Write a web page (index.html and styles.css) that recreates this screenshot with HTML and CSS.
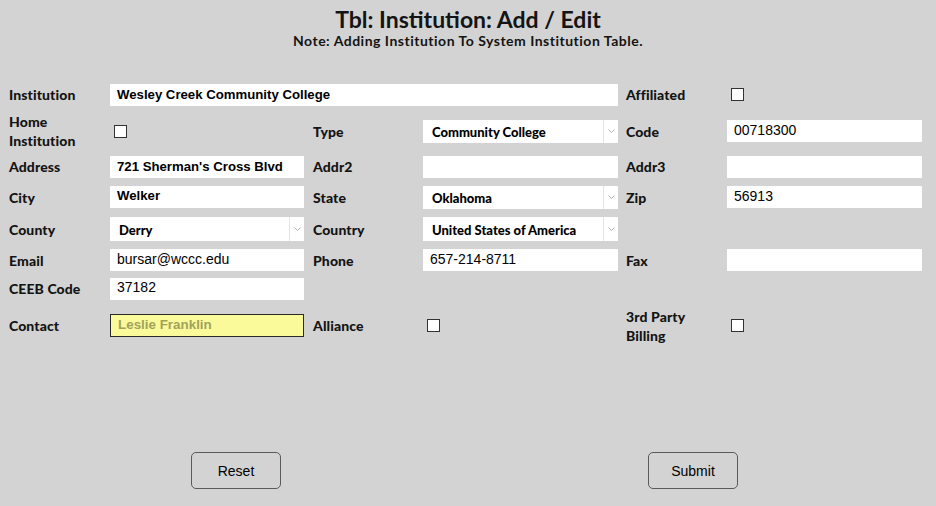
FILE: index.html
```html
<!DOCTYPE html>
<html>
<head>
<meta charset="utf-8">
<link rel="stylesheet" href="styles.css">
</head>
<body>
<div class="page">
  <header class="head">
    <h1 class="title">Tbl: Institution: Add / Edit</h1>
    <p class="note">Note: Adding Institution To System Institution Table.</p>
  </header>
  <form class="form">
    <label class="lbl c1">Institution</label>
    <div class="fld wide"><input class="inp bold" value="Wesley Creek Community College"></div>
    <label class="lbl c3">Affiliated</label>
    <div class="fld"><span class="chk"></span></div>

    <label class="lbl c1">Home<br>Institution</label>
    <div class="fld"><span class="chk"></span></div>
    <label class="lbl c2">Type</label>
    <div class="fld"><div class="sel"><span class="selv">Community College</span><span class="arr"><svg width="7" height="4" viewBox="0 0 7 4"><path d="M0.5 0.5 L3.5 3.5 L6.5 0.5" fill="none" stroke="#b0b0b0" stroke-width="1"/></svg></span></div></div>
    <label class="lbl c3">Code</label>
    <div class="fld"><input class="inp top" value="00718300"></div>

    <label class="lbl c1">Address</label>
    <div class="fld"><input class="inp bold" value="721 Sherman's Cross Blvd"></div>
    <label class="lbl c2">Addr2</label>
    <div class="fld"><input class="inp" value=""></div>
    <label class="lbl c3">Addr3</label>
    <div class="fld"><input class="inp" value=""></div>

    <label class="lbl c1">City</label>
    <div class="fld"><input class="inp bold top" value="Welker"></div>
    <label class="lbl c2">State</label>
    <div class="fld"><div class="sel"><span class="selv">Oklahoma</span><span class="arr"><svg width="7" height="4" viewBox="0 0 7 4"><path d="M0.5 0.5 L3.5 3.5 L6.5 0.5" fill="none" stroke="#b0b0b0" stroke-width="1"/></svg></span></div></div>
    <label class="lbl c3">Zip</label>
    <div class="fld"><input class="inp top" value="56913"></div>

    <label class="lbl c1">County</label>
    <div class="fld"><div class="sel tall"><span class="selv">Derry</span><span class="arr"><svg width="7" height="4" viewBox="0 0 7 4"><path d="M0.5 0.5 L3.5 3.5 L6.5 0.5" fill="none" stroke="#b0b0b0" stroke-width="1"/></svg></span></div></div>
    <label class="lbl c2">Country</label>
    <div class="fld"><div class="sel tall"><span class="selv">United States of America</span><span class="arr"><svg width="7" height="4" viewBox="0 0 7 4"><path d="M0.5 0.5 L3.5 3.5 L6.5 0.5" fill="none" stroke="#b0b0b0" stroke-width="1"/></svg></span></div></div>
    <span class="lbl c3"></span>
    <div class="fld"></div>

    <label class="lbl c1">Email</label>
    <div class="fld"><input class="inp top" value="bursar@wccc.edu"></div>
    <label class="lbl c2">Phone</label>
    <div class="fld"><input class="inp top" value="657-214-8711"></div>
    <label class="lbl c3">Fax</label>
    <div class="fld"><input class="inp" value=""></div>

    <label class="lbl c1">CEEB Code</label>
    <div class="fld"><input class="inp top" value="37182"></div>
    <span class="lbl c2"></span>
    <div class="fld"></div>
    <span class="lbl c3"></span>
    <div class="fld"></div>

    <label class="lbl c1">Contact</label>
    <div class="fld"><input class="inp contact" value="Leslie Franklin"></div>
    <label class="lbl c2">Alliance</label>
    <div class="fld"><span class="chk"></span></div>
    <label class="lbl c3">3rd Party<br>Billing</label>
    <div class="fld"><span class="chk"></span></div>
  </form>
  <div class="actions">
    <button class="btn" type="button">Reset</button>
    <button class="btn" type="button">Submit</button>
  </div>
</div>
</body>
</html>
```

FILE: styles.css
```css
html, body {
  margin: 0;
  padding: 0;
  background: #d3d3d3;
}
body {
  width: 936px;
  height: 506px;
  overflow: hidden;
  font-family: Lato, "Open Sans", sans-serif;
  color: #141414;
}
.page {
  display: flex;
  flex-direction: column;
}
.head {
  display: flex;
  flex-direction: column;
  align-items: center;
  padding-top: 6px;
}
.title {
  margin: 0;
  font-size: 23px;
  font-weight: 700;
  line-height: 26px;
  letter-spacing: 0;
}
.note {
  margin: 0;
  font-size: 14px;
  font-weight: 700;
  line-height: 17px;
  letter-spacing: 0.5px;
}
.form {
  display: grid;
  grid-template-columns: 101px 194px 119px 195px 109px 195px;
  grid-template-rows: 29px 44px 27px 34px 30px 32px 25px 49px;
  align-items: center;
  margin-top: 31px;
  padding-left: 9px;
}
.lbl {
  font-size: 14px;
  font-weight: 900;
  line-height: 19px;
  letter-spacing: 0.1px;
}
.c2 { padding-left: 9px; }
.c3 { padding-left: 8px; }
.fld {
  display: flex;
  align-items: center;
}
.wide {
  grid-column: span 3;
}
.inp {
  box-sizing: border-box;
  width: 100%;
  height: 22px;
  margin: 0;
  border: none;
  outline: none;
  background: #fff;
  padding: 0 7px;
  font-family: "Liberation Sans", Arial, sans-serif;
  font-size: 14px;
  color: #000;
}
.inp.bold { font-weight: 700; font-size: 13.2px; }
.inp.top { padding-bottom: 3px; }
.inp.contact {
  height: 23px;
  background: #fafa9b;
  border: 1px solid #2a2a2a;
  padding-left: 7px;
  padding-bottom: 2px;
  font-size: 13.4px;
  font-weight: 700;
  color: #a2a25a;
}
.sel {
  box-sizing: border-box;
  width: 100%;
  height: 23px;
  background: #fff;
  display: flex;
  align-items: center;
}
.sel.tall { height: 24px; }
.selv {
  flex: 1;
  padding-left: 9px;
  padding-top: 2px;
  font-size: 13px;
  font-weight: 900;
  color: #000;
}
.arr {
  width: 14px;
  align-self: stretch;
  border-left: 1px solid #e4e4e4;
  display: flex;
  align-items: center;
  justify-content: center;
}
.chk {
  box-sizing: border-box;
  width: 13px;
  height: 13px;
  margin-left: 4px;
  background: #fff;
  border: 1px solid #333;
}
.actions {
  display: flex;
  justify-content: space-between;
  margin: 102px 198px 0 191px;
}
.btn {
  box-sizing: border-box;
  width: 90px;
  height: 37px;
  background: transparent;
  border: 1px solid #5a5a5a;
  border-radius: 5px;
  font-family: "Liberation Sans", Arial, sans-serif;
  font-size: 14px;
  color: #000;
}
```
